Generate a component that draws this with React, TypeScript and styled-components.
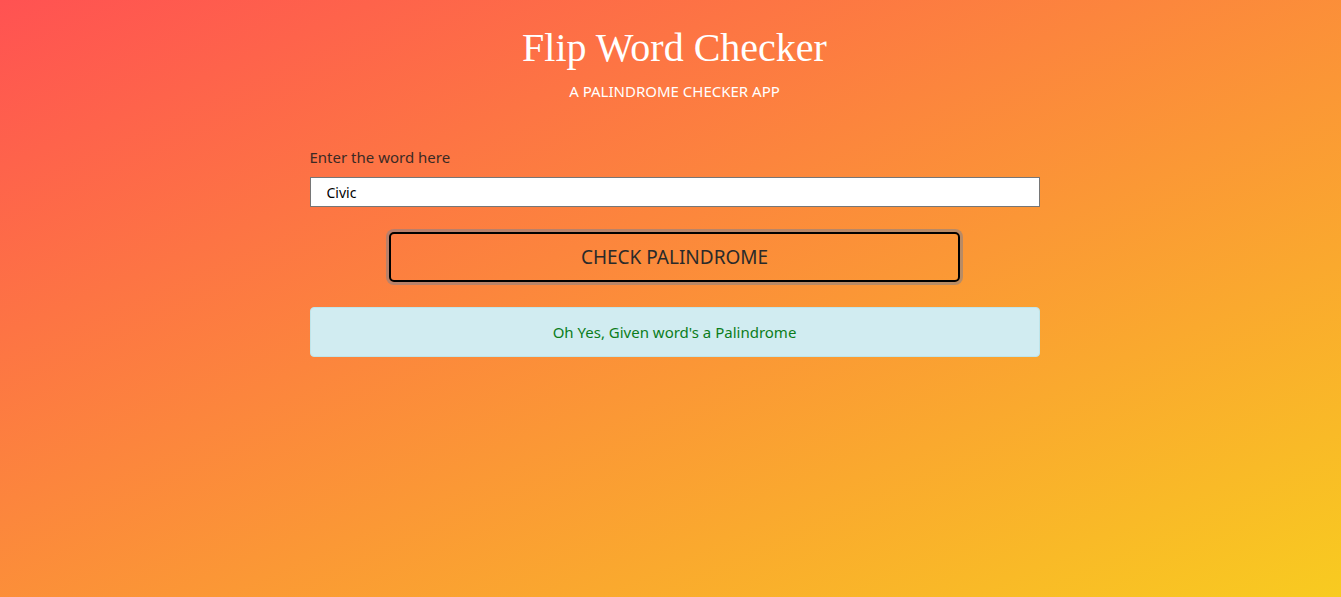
import React from "react";
import styled, { createGlobalStyle } from "styled-components";

const Global = createGlobalStyle`
  html, body { margin: 0; padding: 0; height: 100%; overflow: hidden; }
  body {
    background: linear-gradient(to bottom right, #ff5252, #f8cb20);
    font-family: "Noto Sans", "Open Sans", sans-serif;
  }
  #root { height: 100%; }
`;

const Page = styled.div`
  height: 100%;
  display: flex;
  flex-direction: column;
  align-items: center;
  padding: 25px 0 0 8px;
  box-sizing: border-box;
`;

const Title = styled.h1`
  margin: 0;
  font-family: "Liberation Serif", serif;
  font-weight: 400;
  font-size: 40px;
  line-height: 46px;
  color: #ffffff;
`;

const Subtitle = styled.p`
  margin: 10px 0 0;
  font-size: 15px;
  line-height: 20px;
  color: #ffffff;
`;

const Form = styled.div`
  width: 730px;
  margin-top: 46px;
  display: flex;
  flex-direction: column;
  align-items: center;
`;

const Label = styled.label`
  align-self: stretch;
  font-size: 15px;
  line-height: 20px;
  color: #3b2a24;
  margin-bottom: 10px;
`;

const Input = styled.input`
  align-self: stretch;
  height: 30px;
  box-sizing: border-box;
  border: 1px solid #767676;
  background: #fff;
  padding: 0 16px;
  font-family: "Noto Sans", sans-serif;
  font-size: 14px;
  color: #000;
  outline: none;
`;

const Button = styled.button`
  margin-top: 25px;
  width: 571px;
  height: 50px;
  box-sizing: border-box;
  border: 2px solid #000;
  border-radius: 5px;
  background: transparent;
  box-shadow: 0 0 0 3px rgba(130, 130, 140, 0.55);
  font-family: "Noto Sans", sans-serif;
  font-size: 19px;
  color: #2a2a2a;
  cursor: pointer;
`;

const Alert = styled.div`
  margin-top: 25px;
  align-self: stretch;
  height: 50px;
  box-sizing: border-box;
  background: #d1ecf1;
  border: 1px solid #bee5eb;
  border-radius: 4px;
  display: flex;
  align-items: center;
  justify-content: center;
  font-size: 15px;
  color: #0b7d1b;
`;

export default function App() {
  return (
    <>
      <Global />
      <Page>
        <Title>Flip Word Checker</Title>
        <Subtitle>A PALINDROME CHECKER APP</Subtitle>
        <Form>
          <Label htmlFor="word">Enter the word here</Label>
          <Input id="word" defaultValue="Civic" />
          <Button>CHECK PALINDROME</Button>
          <Alert>Oh Yes, Given word's a Palindrome</Alert>
        </Form>
      </Page>
    </>
  );
}
